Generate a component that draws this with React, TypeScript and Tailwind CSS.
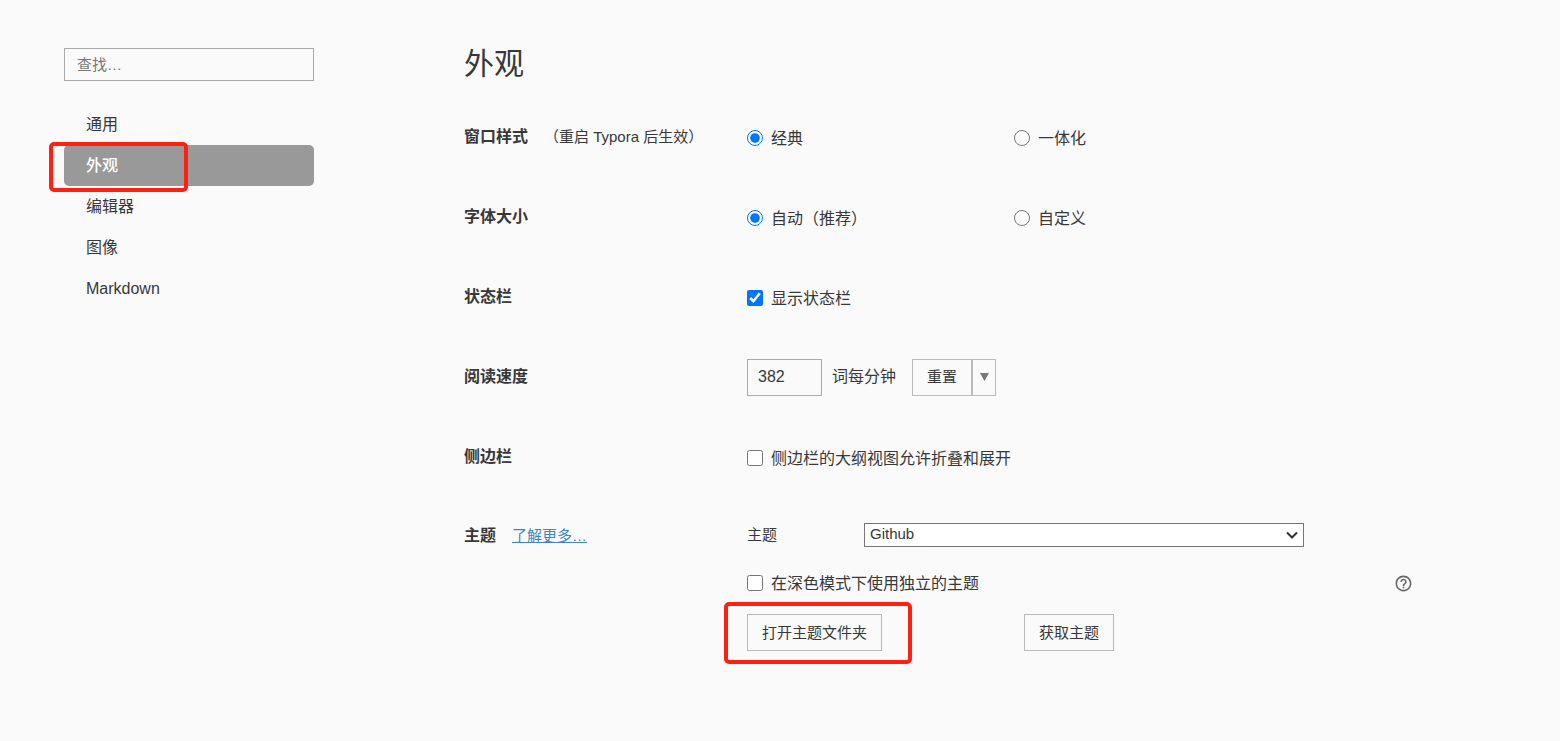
import React, { useState } from "react";

const NAV_ITEMS = ["通用", "外观", "编辑器", "图像", "Markdown"];

function Highlight({ className }: { className: string }) {
  return (
    <span
      aria-hidden="true"
      className={`pointer-events-none absolute rounded-[5px] border-4 border-[#ff2012] ${className}`}
    />
  );
}

function Row({
  title,
  extra,
  children,
}: {
  title: string;
  extra?: React.ReactNode;
  children: React.ReactNode;
}) {
  return (
    <section className="flex min-h-20 items-center">
      <div className="flex w-[283px] shrink-0 items-center">
        <h2 className="text-base leading-6 font-bold">{title}</h2>
        {extra}
      </div>
      <div className="flex flex-1 items-center">{children}</div>
    </section>
  );
}

function Choice({
  type,
  name,
  label,
  checked,
  className = "",
}: {
  type: "radio" | "checkbox";
  name: string;
  label: string;
  checked?: boolean;
  className?: string;
}) {
  return (
    <label className={`flex items-start gap-2 leading-6 ${className}`}>
      <input type={type} name={name} defaultChecked={checked} className="mt-[3px] size-4 shrink-0" />
      {label}
    </label>
  );
}

function PushButton({ children, className = "" }: { children: React.ReactNode; className?: string }) {
  return (
    <button
      type="button"
      className={`h-[37px] border border-[#bbbbbb] px-[14px] text-[15px] leading-6 whitespace-nowrap ${className}`}
    >
      {children}
    </button>
  );
}

export default function App() {
  const [active, setActive] = useState("外观");

  return (
    <div className="flex min-h-screen gap-[150px] bg-[#fafafa] px-16 pb-12 font-['Liberation_Sans','Noto_Sans_CJK_SC',sans-serif] text-base text-[#383838]">
      <aside className="w-[250px] shrink-0 pt-12">
        <input
          type="search"
          aria-label="查找"
          placeholder="查找…"
          className="block h-[33px] w-full border border-[#aaaaaa] px-3 text-[15px] placeholder:text-[#777777]"
        />
        <nav className="mt-[23px]">
          {NAV_ITEMS.map((item) => (
            <a
              key={item}
              href="#"
              onClick={() => setActive(item)}
              aria-current={item === active ? "page" : undefined}
              className={`relative flex h-[41px] items-center rounded-[5px] px-[22px] ${
                item === active ? "bg-[#999999] font-medium text-white" : ""
              }`}
            >
              {item}
              {item === "外观" && <Highlight className="-top-[3px] -bottom-1.5 -left-[15px] w-[139px]" />}
            </a>
          ))}
        </nav>
      </aside>

      <main className="max-w-[949px] flex-1 pt-11">
        <h1 className="mb-[13px] text-[30px] leading-10">外观</h1>

        <Row
          title="窗口样式"
          extra={<span className="ml-4 text-[15px] leading-6">（重启 Typora 后生效）</span>}
        >
          <Choice type="radio" name="window" label="经典" checked className="w-[267px] pt-1" />
          <Choice type="radio" name="window" label="一体化" className="pt-1" />
        </Row>

        <Row title="字体大小">
          <Choice type="radio" name="font-size" label="自动（推荐）" checked className="w-[267px] pt-1" />
          <Choice type="radio" name="font-size" label="自定义" className="pt-1" />
        </Row>

        <Row title="状态栏">
          <Choice type="checkbox" name="status-bar" label="显示状态栏" checked className="pt-1" />
        </Row>

        <Row title="阅读速度">
          <label className="flex items-center gap-[10px]">
            <input
              type="text"
              defaultValue="382"
              className="h-[37px] w-[75px] border border-[#aaaaaa] px-[10px]"
            />
            词每分钟
          </label>
          <div className="ml-4 flex">
            <PushButton>重置</PushButton>
            <button
              type="button"
              aria-label="更多选项"
              className="-ml-px flex h-[37px] w-[25px] items-center justify-center border border-l-2 border-[#bbbbbb]"
            >
              <svg width="9" height="8" viewBox="0 0 9 8" fill="#777777">
                <path d="M0 0h9L4.5 8z" />
              </svg>
            </button>
          </div>
        </Row>

        <Row title="侧边栏">
          <Choice
            type="checkbox"
            name="sidebar"
            label="侧边栏的大纲视图允许折叠和展开"
            className="pt-1"
          />
        </Row>

        <section className="flex items-start pt-[26px]">
          <div className="flex w-[283px] shrink-0 items-center pt-px">
            <h2 className="text-base leading-6 font-bold">主题</h2>
            <a href="#" className="ml-4 text-[15px] leading-6 text-[#4183c4] underline">
              了解更多…
            </a>
          </div>
          <div className="flex-1">
            <div className="flex h-6 items-center">
              <label htmlFor="theme" className="w-[117px] text-[15px]">
                主题
              </label>
              <div className="relative w-[440px]">
                <select
                  id="theme"
                  defaultValue="Github"
                  className="block h-6 w-full appearance-none border border-[#767676] bg-white px-[5px] pb-0.5 text-[15px] leading-5"
                >
                  <option>Github</option>
                </select>
                <svg
                  className="pointer-events-none absolute top-2 right-[6px]"
                  width="12"
                  height="9"
                  viewBox="0 0 12 9"
                  fill="none"
                  stroke="#333333"
                  strokeWidth="2"
                >
                  <path d="M1 1.5l5 5 5-5" />
                </svg>
              </div>
            </div>

            <div className="mt-6 flex h-6 items-center justify-between">
              <Choice type="checkbox" name="dark-theme" label="在深色模式下使用独立的主题" className="pt-px" />
              <button type="button" aria-label="帮助">
                <svg width="19" height="19" viewBox="0 0 24 24" fill="#666666">
                  <path d="M11 18h2v-2h-2v2zm1-16C6.48 2 2 6.48 2 12s4.480 10 10 10 10-4.480 10-10S17.520 2 12 2zm0 18c-4.410 0-8-3.590-8-8s3.590-8 8-8 8 3.590 8 8-3.590 8-8 8zm0-14c-2.210 0-4 1.790-4 4h2c0-1.100.900-2 2-2s2 .900 2 2c0 2-3 1.750-3 5h2c0-2.250 3-2.500 3-5 0-2.210-1.790-4-4-4z" />
                </svg>
              </button>
            </div>

            <div className="mt-[19px] flex">
              <div className="w-[277px]">
                <div className="relative inline-flex">
                  <PushButton>打开主题文件夹</PushButton>
                  <Highlight className="-top-3 -right-[30px] -bottom-[13px] -left-[23px]" />
                </div>
              </div>
              <PushButton>获取主题</PushButton>
            </div>
          </div>
        </section>
      </main>
    </div>
  );
}
